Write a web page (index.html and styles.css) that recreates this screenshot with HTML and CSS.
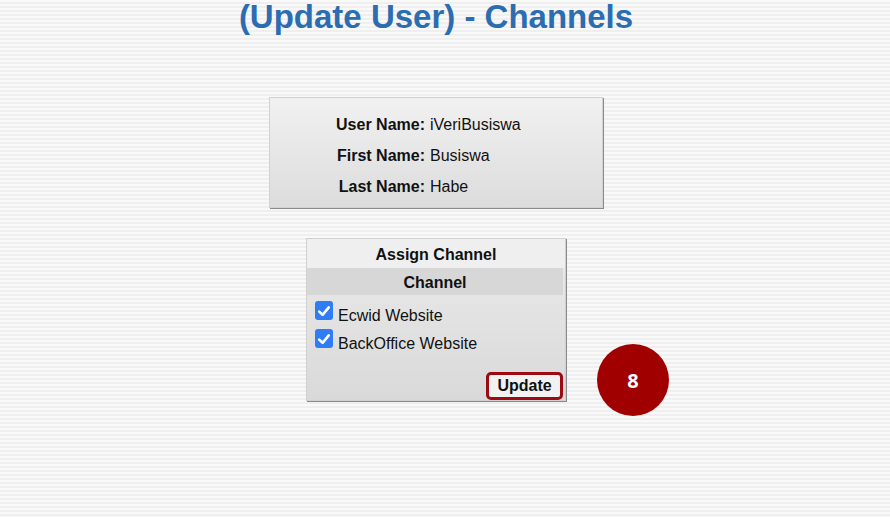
FILE: index.html
```html
<!DOCTYPE html>
<html>
<head>
<meta charset="utf-8">
<title>(Update User) - Channels</title>
<link rel="stylesheet" href="styles.css">
</head>
<body>
<main class="page">
  <h1 class="title">(Update User) - Channels</h1>

  <section class="info">
    <div class="info-row"><span class="label">User Name:</span><span class="value">iVeriBusiswa</span></div>
    <div class="info-row"><span class="label">First Name:</span><span class="value">Busiswa</span></div>
    <div class="info-row"><span class="label">Last Name:</span><span class="value">Habe</span></div>
  </section>

  <section class="assign">
    <div class="assign-title">Assign Channel</div>
    <div class="assign-head">Channel</div>
    <div class="channels">
      <label class="channel">
        <span class="check"><svg viewBox="0 0 18 18" width="18" height="18"><path d="M4.2 9.6 L7.6 12.8 L13.8 5.4" fill="none" stroke="#fff" stroke-width="2.6" stroke-linecap="round" stroke-linejoin="round"/></svg></span>
        <span class="channel-name">Ecwid Website</span>
      </label>
      <label class="channel">
        <span class="check"><svg viewBox="0 0 18 18" width="18" height="18"><path d="M4.2 9.6 L7.6 12.8 L13.8 5.4" fill="none" stroke="#fff" stroke-width="2.6" stroke-linecap="round" stroke-linejoin="round"/></svg></span>
        <span class="channel-name">BackOffice Website</span>
      </label>
    </div>
    <div class="actions">
      <button class="update-btn" type="button">Update</button>
    </div>
  </section>
</main>
<div class="step-badge">8</div>
</body>
</html>
```
FILE: styles.css
```css
html, body {
  margin: 0;
  padding: 0;
}
body {
  width: 890px;
  height: 517px;
  overflow: hidden;
  position: relative;
  font-family: "Liberation Sans", Arial, sans-serif;
  color: #111;
  background: repeating-linear-gradient(to bottom, #f9f9f9 0px, #f9f9f9 2px, #efefef 2px, #efefef 4px);
}
.page {
  width: 872px;
  display: flex;
  flex-direction: column;
  align-items: center;
}
.title {
  margin: 0;
  padding-top: 1px;
  font-size: 33px;
  line-height: 32px;
  font-weight: bold;
  color: #2c6db1;
}
.info {
  margin-top: 64px;
  width: 332px;
  box-sizing: content-box;
  border: 1px solid #d2d2d2;
  box-shadow: 1px 1px 0 #8a8a8a;
  background: linear-gradient(to bottom, #f2f1f1, #dcdcdc);
  padding: 11px 0 5px;
  display: grid;
  grid-template-rows: repeat(3, 31px);
}
.info-row {
  display: grid;
  grid-template-columns: 155px 1fr;
  column-gap: 5px;
  align-items: center;
  font-size: 16px;
}
.label {
  font-weight: bold;
  text-align: right;
}
.assign {
  margin-top: 30px;
  width: 258px;
  border: 1px solid #d0d0d0;
  box-shadow: 1px 1px 0 #8a8a8a;
  background: linear-gradient(to bottom, #ebebeb, #d9d9d9);
  display: flex;
  flex-direction: column;
}
.assign-title {
  height: 29px;
  line-height: 31px;
  text-align: center;
  font-weight: bold;
  font-size: 16px;
  background: #efefef;
}
.assign-head {
  height: 27px;
  line-height: 29px;
  margin-right: 2px;
  text-align: center;
  font-weight: bold;
  font-size: 16px;
  background: #d7d7d7;
}
.channels {
  display: flex;
  flex-direction: column;
  gap: 9px;
  padding: 6px 0 0 8px;
}
.channel {
  display: flex;
  align-items: flex-start;
  gap: 5px;
  font-size: 16px;
  height: 19px;
}
.check {
  width: 18px;
  height: 19px;
  border-radius: 3px;
  background: #2e7cf6;
  display: flex;
  align-items: center;
  justify-content: center;
}
.check svg {
  display: block;
}
.channel-name {
  padding-top: 6px;
  line-height: 18px;
}
.actions {
  display: flex;
  justify-content: flex-end;
  padding: 24px 2px 0 0;
}
.update-btn {
  width: 77px;
  height: 28px;
  box-sizing: border-box;
  border: 3px solid #9d0a12;
  border-radius: 5px;
  background: #f2f2f2;
  font-family: "Liberation Sans", Arial, sans-serif;
  font-weight: bold;
  font-size: 16px;
  color: #111;
  padding: 0;
  line-height: 20px;
}
.step-badge {
  position: absolute;
  left: 597px;
  top: 344px;
  width: 72px;
  height: 72px;
  border-radius: 50%;
  background: #a10000;
  color: #fff;
  font-family: "Open Sans", "Liberation Sans", sans-serif;
  font-weight: bold;
  font-size: 20px;
  display: flex;
  align-items: center;
  justify-content: center;
}
```
